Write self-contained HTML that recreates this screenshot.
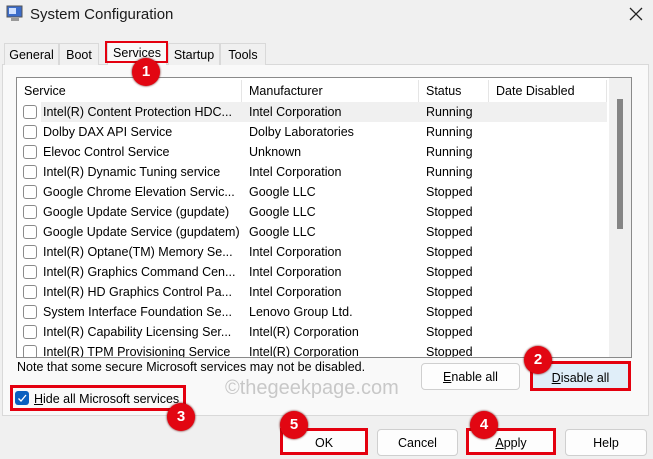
<!DOCTYPE html>
<html><head><style>
*{box-sizing:border-box;margin:0;padding:0}
body{width:653px;height:459px;background:#f0f0f0;font-family:"Liberation Sans",sans-serif;font-size:12.5px;color:#000;position:relative;overflow:hidden}
.a{position:absolute}
.title{left:30px;top:6px;font-size:15px;color:#1a1a1a}
.tab{top:43px;height:22px;font-size:12.5px;padding-top:4px;text-align:center;border:1px solid #d9d9d9;border-bottom:none;background:#f0f0f0}
.panel{left:2px;top:64px;width:647px;height:352px;border:1px solid #d9d9d9;background:#f9f9f9}
.list{left:16px;top:77px;width:616px;height:281px;border:1px solid #8a8a8a;background:#fff;overflow:hidden}
.hdr{top:2px;height:22px;font-size:12.5px;padding-top:4px;border-right:1px solid #e5e5e5}
.row{left:0;width:590px;height:20px}
.row span{position:absolute;top:3px;white-space:nowrap}
.cb{position:absolute;left:6px;top:3px;width:14px;height:14px;border:1px solid #8a8a8a;border-radius:3px;background:#fff}
.btn{height:27px;border:1px solid #cfcfcf;border-radius:4px;background:#fdfdfd;text-align:center;padding-top:6px;font-size:12.5px}
.red{border:3px solid #e4000f}
.c{width:28px;height:28px;border-radius:50%;background:#e20612;color:#fff;font-weight:bold;font-size:15px;text-align:center;line-height:28px;box-shadow:0 0 2px #600}
</style></head><body>
<svg class="a" style="left:6px;top:5px" width="18" height="18" viewBox="0 0 18 18"><rect x="1" y="1" width="15" height="11" fill="#3b6cc9" stroke="#555"/><rect x="3" y="3" width="7" height="6" fill="#cfe0ff"/><rect x="5" y="13" width="8" height="3" fill="#999"/></svg>
<div class="a title">System Configuration</div>
<svg class="a" style="left:629px;top:7px" width="14" height="14"><path d="M1 1L13 13M13 1L1 13" stroke="#222" stroke-width="1.3"/></svg>
<div class="a panel"></div>
<div class="a tab" style="left:4px;width:55px">General</div>
<div class="a tab" style="left:59px;width:40px">Boot</div>
<div class="a tab" style="left:107px;width:60px;top:41px;height:24px;background:#f9f9f9;border-bottom:none">Services</div>
<div class="a" style="left:105px;top:41px;width:63px;height:22px;border:2px solid #e4000f"></div>
<div class="a tab" style="left:168px;width:52px">Startup</div>
<div class="a tab" style="left:220px;width:46px">Tools</div>
<div class="a list">
 <div class="a hdr" style="left:0;width:225px;padding-left:7px">Service</div>
 <div class="a hdr" style="left:225px;width:177px;padding-left:7px">Manufacturer</div>
 <div class="a hdr" style="left:402px;width:70px;padding-left:7px">Status</div>
 <div class="a hdr" style="left:472px;width:118px;padding-left:7px">Date Disabled</div>
 <div class="a" style="left:592px;top:0;width:22px;height:281px;background:#f0f0f0"></div>
 <div class="a" style="left:600px;top:21px;width:6px;height:130px;background:#858585"></div>
 <div class="a" style="left:24px;top:24px;width:566px;height:20px;background:#f0f0f0"></div>
 <div class="a" id="rows" style="left:0;top:24px;width:590px"></div>
</div>
<div class="a" style="left:17px;top:360px;font-size:12.5px">Note that some secure Microsoft services may not be disabled.</div>
<div class="a" style="left:225px;top:377px;font-size:20px;color:#c8c8c8">©thegeekpage.com</div>
<div class="a btn" style="left:421px;top:363px;width:99px"><u>E</u>nable all</div>
<div class="a btn red" style="left:530px;top:361px;width:101px;height:30px;background:#e0eef9;border-radius:0;padding-top:7px"><u>D</u>isable all</div>
<div class="a red" style="left:10px;top:385px;width:176px;height:26px"></div>
<div class="a" style="left:15px;top:391px;width:14px;height:14px;border-radius:3px;background:#0a5fbf"></div>
<svg class="a" style="left:15px;top:391px" width="14" height="14"><path d="M3.5 7.5L6 10L11 4" stroke="#fff" stroke-width="1.3" fill="none"/></svg>
<div class="a" style="left:34px;top:392px"><u>H</u>ide all Microsoft services</div>
<div class="a btn red" style="left:280px;top:428px;width:88px;border-radius:0;padding-top:5px">OK</div>
<div class="a btn" style="left:377px;top:429px;width:81px">Cancel</div>
<div class="a btn red" style="left:466px;top:428px;width:90px;border-radius:0;padding-top:5px"><u>A</u>pply</div>
<div class="a btn" style="left:565px;top:429px;width:82px">Help</div>
<div class="a c" style="left:132px;top:58px">1</div>
<div class="a c" style="left:524px;top:346px">2</div>
<div class="a c" style="left:167px;top:403px">3</div>
<div class="a c" style="left:470px;top:411px">4</div>
<div class="a c" style="left:280px;top:411px">5</div>
<script>
var d=[["Intel(R) Content Protection HDC...","Intel Corporation","Running"],["Dolby DAX API Service","Dolby Laboratories","Running"],["Elevoc Control Service","Unknown","Running"],["Intel(R) Dynamic Tuning service","Intel Corporation","Running"],["Google Chrome Elevation Servic...","Google LLC","Stopped"],["Google Update Service (gupdate)","Google LLC","Stopped"],["Google Update Service (gupdatem)","Google LLC","Stopped"],["Intel(R) Optane(TM) Memory Se...","Intel Corporation","Stopped"],["Intel(R) Graphics Command Cen...","Intel Corporation","Stopped"],["Intel(R) HD Graphics Control Pa...","Intel Corporation","Stopped"],["System Interface Foundation Se...","Lenovo Group Ltd.","Stopped"],["Intel(R) Capability Licensing Ser...","Intel(R) Corporation","Stopped"],["Intel(R) TPM Provisioning Service","Intel(R) Corporation","Stopped"]];
var h="";d.forEach(function(r,i){h+='<div class="a row" style="top:'+(i*20)+'px"><div class="cb"></div><span style="left:26px">'+r[0]+'</span><span style="left:232px">'+r[1]+'</span><span style="left:409px">'+r[2]+'</span></div>'});
document.getElementById("rows").innerHTML=h;
</script>
</body></html>
